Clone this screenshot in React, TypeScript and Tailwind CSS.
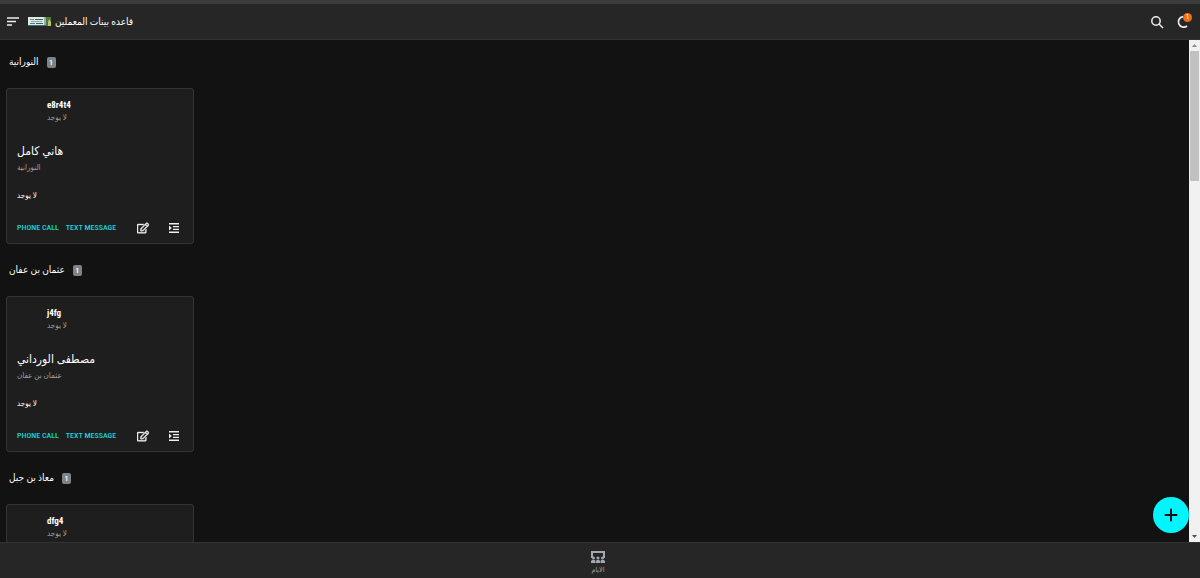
import { FaRegEdit } from 'react-icons/fa';

interface Teacher {
  code: string;
  status: string;
  name: string;
  note: string;
}

interface Group {
  title: string;
  teachers: Teacher[];
}

const groups: Group[] = [
  {
    title: 'النورانية',
    teachers: [{ code: 'e8r4t4', status: 'لا يوجد', name: 'هاني كامل', note: 'لا يوجد' }],
  },
  {
    title: 'عثمان بن عفان',
    teachers: [{ code: 'j4fg', status: 'لا يوجد', name: 'مصطفى الورداني', note: 'لا يوجد' }],
  },
  {
    title: 'معاذ بن جبل',
    teachers: [{ code: 'dfg4', status: 'لا يوجد', name: '', note: '' }],
  },
];

function Logo() {
  return (
    <svg viewBox="0 0 23 9" className="w-[23px] h-[9px]" aria-hidden="true">
      <rect width="23" height="9" fill="#dfe9e4" />
      <rect x="2" y="2" width="4" height="1" fill="#6f8f92" />
      <rect x="7" y="2" width="8" height="1" fill="#3f6064" />
      <rect x="3" y="4" width="11" height="1" fill="#8fa9aa" />
      <rect x="2" y="6" width="5" height="1" fill="#567a80" />
      <rect x="8" y="6" width="7" height="1" fill="#3f6064" />
      <rect y="8" width="18" height="1" fill="#2f6d80" />
      <rect x="16" width="3" height="8" fill="#8fb0b4" />
      <rect x="18" width="5" height="9" fill="#54763a" />
      <path d="M20 9V5l1-3 2 3v4z" fill="#b9c66b" />
    </svg>
  );
}

function DaysIcon() {
  return (
    <svg viewBox="0 0 14 12" className="w-[14px] h-3" fill="#a3a8ac" aria-hidden="true">
      <path d="M0 0h14v7h-2V2H2v5H0z" />
      <circle cx="2.500" cy="7" r="1.500" />
      <circle cx="7" cy="7" r="1.500" />
      <circle cx="11.500" cy="7" r="1.500" />
      <path d="M0 12v-1.500q0-1.500 1.500-1.500h2q1 0 1 1.500V12zM5 12v-1.500Q5 9 6 9h2q1 0 1 1.500V12zM9.500 12v-1.500q0-1.500 1-1.500h2q1.500 0 1.500 1.500V12z" />
    </svg>
  );
}

function IndentIcon() {
  return (
    <svg viewBox="0 0 10 10" className="w-[10px] h-[10px]" fill="#eee" aria-hidden="true">
      <path d="M0 0h10v1.400H0zM4 2.900h6v1.400H4zM4 5.700h6v1.400H4zM0 8.600h10V10H0zM0 2.400L2.800 5 0 7.600z" />
    </svg>
  );
}

function TeacherCard({ teacher, group }: { teacher: Teacher; group: string }) {
  return (
    <article className="w-[188px] h-[156px] shrink-0 flex flex-col rounded-[3px] border border-[#333] bg-[#1e1e1e] px-[10px]">
      <div className="h-12 pt-[10px] pl-[30px]">
        <p className="text-[9px] leading-3 font-bold text-white">{teacher.code}</p>
        <p className="text-[8px] leading-[14px] text-[#a0a0a0]">{teacher.status}</p>
      </div>
      <h3 className="h-4 mt-[6px] text-[12px] leading-4 font-medium text-white">{teacher.name}</h3>
      <p className="mt-[2px] text-[8px] leading-[14px] text-[#a0a0a0]">{group}</p>
      <p className="h-[14px] mt-[14px] text-[8px] leading-[14px] text-white">{teacher.note}</p>
      <div className="mt-[17px] flex items-center h-4">
        <button className="text-[8px] leading-3 font-medium text-[#1ad5d8] whitespace-nowrap">PHONE CALL</button>
        <button className="ml-[7px] text-[8px] leading-3 font-medium text-[#1ad5d8] whitespace-nowrap">TEXT MESSAGE</button>
        <button aria-label="Edit" className="ml-auto text-[#eee]">
          <FaRegEdit size={12} stroke="currentColor" strokeWidth={20} />
        </button>
        <button aria-label="Details" className="ml-5 mr-1">
          <IndentIcon />
        </button>
      </div>
    </article>
  );
}

function Scrollbar() {
  return (
    <div className="w-[11px] shrink-0 flex flex-col items-center bg-[#f1f1f1]" aria-hidden="true">
      <svg viewBox="0 0 11 11" className="w-[11px] h-[11px]">
        <path d="M3 7l2.500-3L8 7z" fill="#8a8a8a" />
      </svg>
      <div className="w-[9px] h-[130px] bg-[#c1c1c1]" />
      <svg viewBox="0 0 11 11" className="w-[11px] h-[11px] mt-auto">
        <path d="M3 4l2.500 3L8 4z" fill="#505050" />
      </svg>
    </div>
  );
}

export default function App() {
  return (
    <div className="h-screen flex flex-col overflow-hidden bg-[#121212] text-white font-['Roboto_Condensed','Liberation_Sans_Narrow','DejaVu_Sans_Condensed','DejaVu_Sans',sans-serif]">
      {/* Header */}
      <header className="h-10 shrink-0 flex items-center border-t-4 border-t-[#3c3c3c] border-b border-b-[#333] bg-[#262626] pl-[7px] pr-[10px]">
        <button aria-label="Menu">
          <svg viewBox="0 0 12 9" className="w-3 h-[9px]" stroke="#eee" strokeWidth="1.500" aria-hidden="true">
            <path d="M0 1h12M0 4.500h9M0 8h5" />
          </svg>
        </button>
        <div className="ml-[9px] flex items-center gap-1">
          <Logo />
          <h1 className="text-[10px] leading-4 font-medium text-white">قاعده بينات المعملين</h1>
        </div>
        <div className="ml-auto flex items-center gap-3">
          <button aria-label="Search">
            <svg viewBox="0 0 14 14" className="w-[14px] h-[14px]" fill="none" stroke="#eee" strokeWidth="1.500" aria-hidden="true">
              <circle cx="6" cy="6" r="4.200" />
              <path d="M9 9l4 4" />
            </svg>
          </button>
          <button aria-label="Sync" className="relative">
            <svg viewBox="0 0 14 14" className="w-[14px] h-[14px]" fill="none" stroke="#eee" strokeWidth="1.700" aria-hidden="true">
              <path d="M7 1.600A5.300 5.300 0 1 0 11 11" />
            </svg>
            <span className="absolute -top-[2px] -right-[2px] w-[9px] h-[9px] rounded-full bg-[#f0700f] text-[7px] leading-[9px] text-center text-white">
              1
            </span>
          </button>
        </div>
      </header>

      {/* Groups */}
      <div className="relative flex flex-1 min-h-0">
        <main className="flex-1 min-w-0 overflow-y-auto [scrollbar-width:none] pt-1 pl-[6px]">
          {groups.map((group) => (
            <section key={group.title} className="mb-2">
              <div className="h-9 mb-2 pl-[3px] flex items-center gap-2">
                <h2 className="text-[10px] leading-4 font-medium text-white">{group.title}</h2>
                <span className="w-[9px] h-[11px] rounded-[2px] bg-[#808386] text-[8px] leading-[11px] font-medium text-center text-white">
                  {group.teachers.length}
                </span>
              </div>
              <div className="flex gap-2">
                {group.teachers.map((teacher) => (
                  <TeacherCard key={teacher.code} teacher={teacher} group={group.title} />
                ))}
              </div>
            </section>
          ))}
        </main>
        <Scrollbar />
        <button
          aria-label="Add"
          className="absolute right-[11px] bottom-[9px] w-9 h-9 flex items-center justify-center rounded-full bg-[#00f6ff]"
        >
          <svg viewBox="0 0 14 14" className="w-[14px] h-[14px]" stroke="#101010" strokeWidth="2" strokeLinecap="round" aria-hidden="true">
            <path d="M7 1.500v11M1.500 7h11" />
          </svg>
        </button>
      </div>

      {/* Bottom navigation */}
      <nav className="h-9 shrink-0 flex justify-center border-t border-[#333] bg-[#262626] pr-1">
        <button className="flex flex-col items-center pt-2">
          <DaysIcon />
          <span className="mt-[2px] text-[7px] leading-[10px] text-[#a3a8ac]">الايام</span>
        </button>
      </nav>
    </div>
  );
}
